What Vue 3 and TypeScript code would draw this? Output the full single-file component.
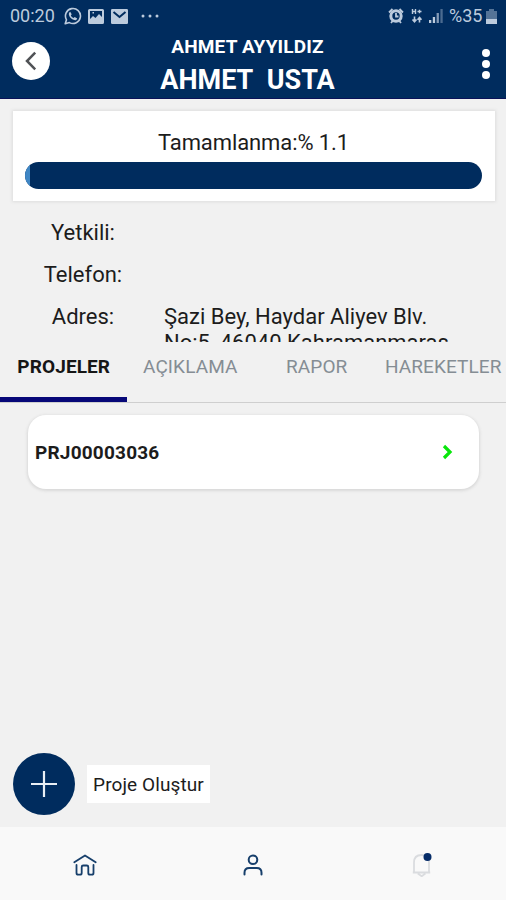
<script setup lang="ts">
import { ref } from 'vue'

interface Field {
  label: string
  value: string
}

const progress = 1.1
const fields: Field[] = [
  { label: 'Yetkili:', value: '' },
  { label: 'Telefon:', value: '' },
  { label: 'Adres:', value: 'Şazi Bey, Haydar Aliyev Blv. No:5, 46040 Kahramanmaraş' },
]
const tabs: string[] = ['PROJELER', 'AÇIKLAMA', 'RAPOR', 'HAREKETLER']
const activeTab = ref<string>('PROJELER')
const projects: string[] = ['PRJ00003036']
</script>

<template>
  <div class="screen">
    <header class="header">
      <div class="status">
        <span class="clock">00:20</span>
        <svg class="ic-chat" viewBox="0 0 18 18" width="18" height="18">
          <path d="M1.2 16.8l1.3-4A7.5 7.5 0 1 1 5.4 15.600z" fill="none" stroke="currentColor" stroke-width="1.6" stroke-linejoin="round" />
          <path d="M6.200 4.800l1.500 2.500-.9 1.200c.6 1.300 1.400 2 2.800 2.600l1.100-1 2.500 1.300c-.3 1.500-1.700 2-3 1.700C7.500 12.400 5.400 10.200 4.900 7.700c-.2-1.200.2-2.500 1.300-2.900z" fill="currentColor" />
        </svg>
        <svg class="ic-image" viewBox="0 0 16 15" width="16" height="15">
          <path fill="currentColor" fill-rule="evenodd" d="M1.500 0h13A1.500 1.500 0 0 1 16 1.500v12a1.500 1.500 0 0 1-1.500 1.500h-13A1.500 1.500 0 0 1 0 13.500v-12A1.500 1.500 0 0 1 1.500 0zM2 2v8l3-3 2.500 2L11 5l3 3V2zM4.500 3h1.500v1.600H4.500z" />
        </svg>
        <svg class="ic-mail" viewBox="0 0 17 15" width="17" height="15">
          <rect width="17" height="15" rx="1.200" fill="currentColor" />
          <path d="M2.500 3l6 5 6-5" fill="none" stroke="#002c5e" stroke-width="2" />
        </svg>
        <svg class="ic-more" viewBox="0 0 18 4" width="18" height="4" fill="currentColor">
          <circle cx="2" cy="2" r="1.500" /><circle cx="9" cy="2" r="1.500" /><circle cx="16" cy="2" r="1.500" />
        </svg>
        <span class="grow"></span>
        <svg class="ic-alarm" viewBox="0 0 16 16" width="16" height="16">
          <circle cx="8" cy="8" r="5.200" fill="none" stroke="currentColor" stroke-width="3" />
          <path d="M1 4.500L4.500 1M15 4.500L11.500 1M3 15l2-2.500M13 15l-2-2.500M8 5v3.500h2.500" fill="none" stroke="currentColor" stroke-width="1.800" />
        </svg>
        <svg class="ic-data" viewBox="0 0 12 16" width="12" height="16" fill="none" stroke="currentColor">
          <path d="M1.500 1v5M4.500 1v5M1.500 3.500h3M6.500 3.500h4M8.500 1.800v3.400" stroke-width="1.400" />
          <path d="M3.500 8.500v5M1.500 11.500l2 2.200 2-2.200M8.500 14.500v-5M6.500 11.700l2-2.200 2 2.200" stroke-width="1.600" />
        </svg>
        <svg class="ic-signal" viewBox="0 0 14 14" width="14" height="14" fill="currentColor">
          <path d="M0 11h2.300v3H0zM3.800 8h2.300v6H3.800z" />
          <path d="M7.600 4h2.300v10H7.600z" opacity=".7" />
          <path d="M11.400 0h2.300v14h-2.300z" opacity=".4" />
        </svg>
        <span class="battery-text">%35</span>
        <svg class="ic-battery" viewBox="0 0 11 15" width="11" height="15" fill="currentColor">
          <path d="M3 0h5v2h3v8H0V2h3z" opacity=".45" />
          <path d="M0 10h11v5H0z" />
        </svg>
      </div>
      <div class="title-row">
        <button class="back" aria-label="Geri">
          <svg viewBox="0 0 12 20" width="12" height="20"><path d="M10.200 1.700L2 10l8.200 8.300" fill="none" stroke="#505256" stroke-width="2.500" /></svg>
        </button>
        <div class="titles">
          <div class="subtitle">AHMET AYYILDIZ</div>
          <h1 class="title">AHMET&nbsp; USTA</h1>
        </div>
        <button class="menu" aria-label="Menü">
          <span class="dot"></span><span class="dot"></span><span class="dot"></span>
        </button>
      </div>
    </header>

    <section class="progress-card">
      <div class="progress-label">Tamamlanma:% {{ progress }}</div>
      <div class="bar"><div class="bar-fill" :style="{ width: progress + '%' }"></div></div>
    </section>

    <section class="details">
      <div v-for="field in fields" :key="field.label" class="field">
        <div class="field-label">{{ field.label }}</div>
        <div class="field-value">{{ field.value }}</div>
      </div>
    </section>

    <nav class="tabs">
      <button
        v-for="tab in tabs"
        :key="tab"
        class="tab"
        :class="{ active: tab === activeTab }"
        @click="activeTab = tab"
      >{{ tab }}</button>
    </nav>

    <main class="projects">
      <article v-for="project in projects" :key="project" class="project">
        <span class="project-code">{{ project }}</span>
        <svg viewBox="0 0 11 16" width="11" height="16"><path d="M2 2l6 6-6 6" fill="none" stroke="#08e60b" stroke-width="3.200" /></svg>
      </article>
    </main>

    <div class="create">
      <button class="fab" aria-label="Ekle">
        <svg viewBox="0 0 26 26" width="26" height="26"><path d="M13 0v26M0 13h26" stroke="#e9eff5" stroke-width="2.200" /></svg>
      </button>
      <span class="create-label">Proje Oluştur</span>
    </div>

    <footer class="bottom-nav">
      <div class="nav-item">
        <svg viewBox="0 0 24 22" width="24" height="22" fill="none" stroke="#173f6b" stroke-width="1.800" stroke-linejoin="round" stroke-linecap="round">
          <path d="M1.300 8.300L12 1.400l10.700 6.900" />
          <path d="M3.500 11v8q0 1.700 1.700 1.700H7q1.700 0 1.700-1.700v-6q0-1.500 1.500-1.500h3.600q1.500 0 1.500 1.500v6q0 1.700 1.700 1.700h1.800q1.700 0 1.700-1.700v-8" />
        </svg>
      </div>
      <div class="nav-item">
        <svg viewBox="0 0 20 22" width="20" height="22" fill="none" stroke="#173f6b" stroke-width="2" stroke-linecap="round">
          <circle cx="10" cy="5.700" r="4.300" />
          <path d="M1.500 20.500v-1.800q0-4.700 4.700-4.700h7.600q4.700 0 4.700 4.700v1.800" />
        </svg>
      </div>
      <div class="nav-item">
        <svg viewBox="0 0 20 26" width="20" height="26" fill="none">
          <path d="M.8 20.500h17.400M2 20V10.500C2 5.500 5 3 9.500 3S17 5.500 17 10.500V20M5.800 21.500l3.900 2.700 3.700-2.700" stroke="#dadcdf" stroke-width="1.800" stroke-linejoin="round" />
          <circle cx="15.500" cy="5" r="4" fill="#062c68" />
        </svg>
      </div>
    </footer>
  </div>
</template>

<style>
body {
  margin: 0;
  background: #f1f1f1;
}
</style>

<style scoped>
.screen {
  display: flex;
  flex-direction: column;
  width: 506px;
  height: 900px;
  overflow: hidden;
  background: #f1f1f1;
  color: #1c1c1c;
  font-family: Roboto, "Liberation Sans", sans-serif;
}

button {
  margin: 0;
  padding: 0;
  border: 0;
  background: none;
  font: inherit;
  color: inherit;
}

svg {
  display: block;
  flex: none;
}

.header {
  box-sizing: border-box;
  height: 99px;
  flex: none;
  background: #002c5e;
  border-bottom: 1px solid #0a1258;
  color: #fff;
}

.status {
  display: flex;
  align-items: center;
  box-sizing: border-box;
  height: 32px;
  padding: 0 9px 0 10px;
  color: #bccbdd;
}

.clock {
  width: 54px;
  font-size: 18px;
  line-height: 32px;
}

.ic-image { margin-left: 6px; }
.ic-mail { margin-left: 7px; }
.ic-more { margin-left: 13px; }
.grow { flex: 1; }
.ic-data { margin-left: 7px; }
.ic-signal { margin-left: 6px; }

.battery-text {
  width: 34px;
  margin-left: 6px;
  font-size: 18px;
  line-height: 32px;
}

.ic-battery { margin-left: 3px; }

.title-row {
  display: grid;
  grid-template-columns: 38px 1fr 38px;
  padding: 0 12px;
}

.back {
  display: flex;
  align-items: center;
  justify-content: center;
  width: 38px;
  height: 38px;
  margin-top: 10px;
  border-radius: 50%;
  background: #fff;
}

.titles {
  padding: 3px 0 0;
  margin-left: -11px;
  text-align: center;
}

.subtitle {
  font-size: 19px;
  line-height: 23px;
  font-weight: 700;
  letter-spacing: 0.15px;
}

.title {
  margin: 5px 0 0;
  font-size: 27px;
  line-height: 34px;
  font-weight: 700;
}

.menu {
  display: flex;
  flex-direction: column;
  align-items: flex-end;
  gap: 3px;
  padding: 17px 4px 0 0;
}

.dot {
  width: 8px;
  height: 8px;
  border-radius: 50%;
  background: #fff;
}

.progress-card {
  box-sizing: border-box;
  height: 90px;
  flex: none;
  margin: 12px 11px 0 13px;
  padding: 17px 13px 0 12px;
  background: #fff;
  box-shadow: 0 0 3px 1px #dedede;
}

.progress-label {
  height: 34px;
  font-size: 22px;
  line-height: 30px;
  letter-spacing: -0.1px;
  text-align: center;
}

.bar {
  height: 27px;
  overflow: hidden;
  border-radius: 14px;
  background: #002c5e;
}

.bar-fill {
  height: 100%;
  background: #3f86c4;
}

.details {
  height: 131px;
  flex: none;
  margin-top: 10px;
  overflow: hidden;
}

.field {
  display: grid;
  grid-template-columns: 166px 1fr;
  height: 42px;
  font-size: 22px;
  line-height: 25px;
}

.field-label {
  padding-top: 9px;
  text-align: center;
}

.field-value {
  width: 300px;
  margin-left: -2px;
  padding-top: 8.5px;
  line-height: 26px;
}

.tabs {
  display: grid;
  grid-template-columns: repeat(4, 1fr);
  box-sizing: border-box;
  height: 61px;
  flex: none;
  border-bottom: 1px solid #cfcfcf;
}

.tab {
  box-sizing: border-box;
  height: 60px;
  padding: 0 0 7px 1px;
  border-bottom: 5px solid transparent;
  color: #858d94;
  font-size: 19px;
  letter-spacing: 0.1px;
  white-space: nowrap;
}

.tab.active {
  border-bottom-color: #070878;
  color: #161616;
  font-weight: 700;
}

.projects {
  flex: 1;
  padding: 12px 27px 0 28px;
}

.project {
  display: flex;
  align-items: center;
  justify-content: space-between;
  box-sizing: border-box;
  height: 74px;
  padding: 0 26px 0 7px;
  border-radius: 18px;
  background: #fff;
  box-shadow: 0 1px 3px 1px #d9d9d9;
}

.project-code {
  font-size: 19px;
  font-weight: 700;
  letter-spacing: 0.2px;
}

.create {
  display: flex;
  align-items: center;
  gap: 12px;
  padding: 0 13px 12px;
}

.fab {
  display: flex;
  align-items: center;
  justify-content: center;
  width: 62px;
  height: 62px;
  border-radius: 50%;
  background: #002c5e;
}

.create-label {
  box-sizing: border-box;
  width: 123px;
  padding-top: 1px;
  background: #fff;
  font-size: 19px;
  line-height: 37px;
  letter-spacing: 0.1px;
  text-align: center;
  white-space: nowrap;
}

.bottom-nav {
  display: grid;
  grid-template-columns: repeat(3, 1fr);
  box-sizing: border-box;
  height: 73px;
  flex: none;
  padding: 2px 0 0 1px;
  background: #f9f9f9;
}

.nav-item {
  display: flex;
  align-items: center;
  justify-content: center;
}
</style>
